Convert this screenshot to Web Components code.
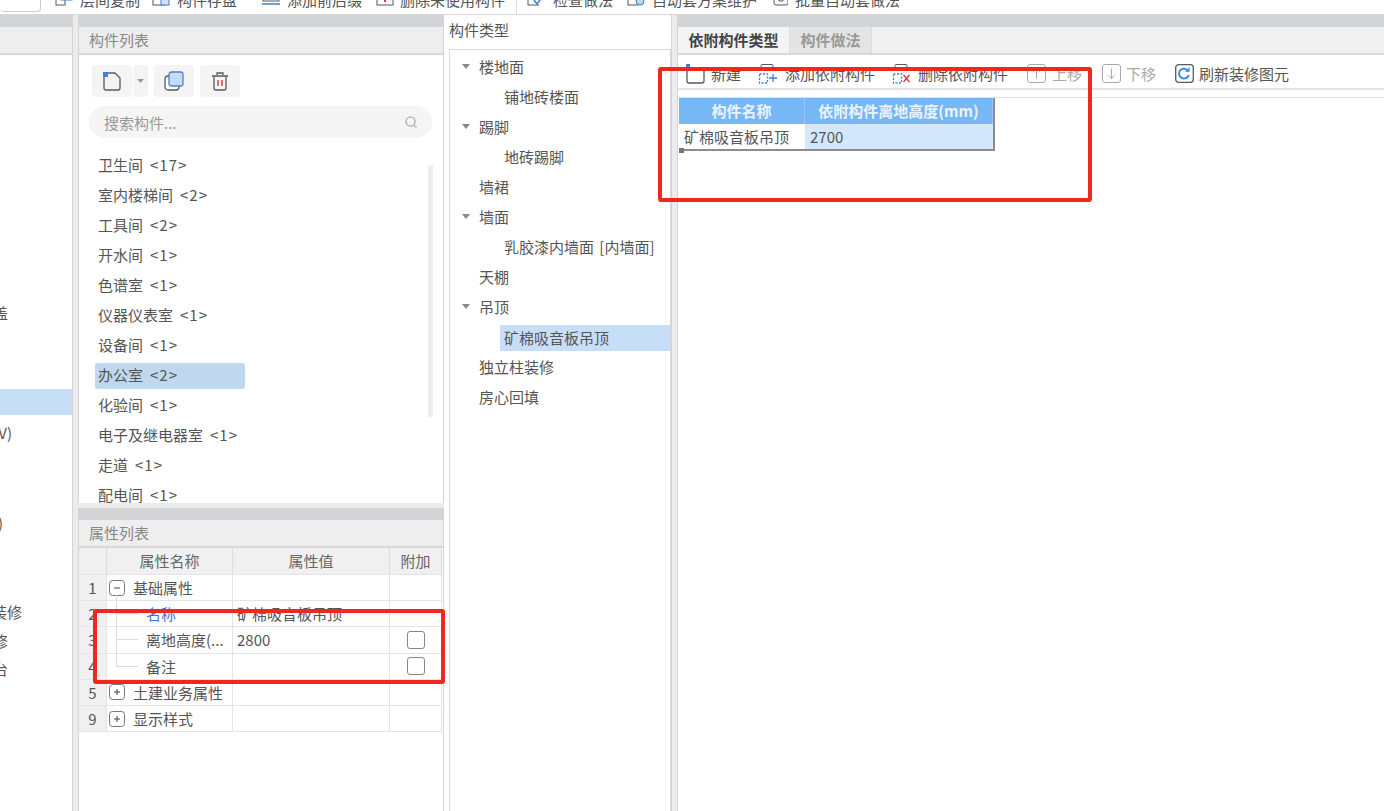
<!DOCTYPE html>
<html>
<head>
<meta charset="utf-8">
<style>
  html, body { margin: 0; height: 100%; overflow: hidden; background: #fff; }
  body { font: 15px "Noto Sans CJK SC", "Liberation Sans", sans-serif; color: #555; }
</style>
</head>
<body>
<app-shell></app-shell>

<script>
const FONT = `"Noto Sans CJK SC", "Liberation Sans", sans-serif`;

// top toolbar, only the lower part of it is on screen
const ICONS = {
  floors: `<rect x="1" y="3" width="9" height="10" fill="none" stroke="#556"/><rect x="6" y="0" width="11" height="8" fill="#fff" stroke="#3b7fd0"/>`,
  stock: `<rect x="1" y="1" width="12" height="12" fill="none" stroke="#556"/><rect x="9" y="4" width="8" height="9" fill="#cfe2f8" stroke="#3b7fd0"/>`,
  addFloor: `<rect x="1" y="0" width="16" height="9" fill="none" stroke="#556"/><path d="M0 12h18" stroke="#3b7fd0" stroke-width="1.5"/>`,
  delFloor: `<rect x="1" y="0" width="16" height="13" fill="none" stroke="#556"/><path d="M9 7v3" stroke="#d33" stroke-width="2"/>`,
  check: `<path d="M5 1H1v12h11" fill="none" stroke="#556"/><path d="M7 8l3 4 8-11" fill="none" stroke="#3b7fd0" stroke-width="1.6"/>`,
  auto: `<rect x="1" y="1" width="10" height="12" fill="none" stroke="#556"/><circle cx="13" cy="9" r="4" fill="#bcd6f5" stroke="#3b7fd0"/>`,
  batch: `<rect x="1" y="1" width="14" height="12" rx="2" fill="none" stroke="#556"/><path d="M6 1v8M10 1v8M6 9h4" stroke="#556"/>`
};

class TopBar extends HTMLElement {
  constructor() {
    super();
    this.attachShadow({ mode: "open" });
    // icon, label, icon width, gap to label, margin before
    const items = [
      ["floors", "层间复制", 18, 7, 14],
      ["stock", "构件存盘", 20, 5, 12],
      ["addFloor", "添加前后缀", 19, 6, 25],
      ["delFloor", "删除未使用构件", 19, 5, 14],
      ["check", "检查做法", 20, 6, 0],
      ["auto", "自动套方案维护", 18, 7, 14],
      ["batch", "批量自动套做法", 15, 7, 16]
    ];
    this.shadowRoot.innerHTML = `
      <style>
        :host { display: block; height: 14px; border-bottom: 1px solid #d6d6d6; overflow: hidden; background: #fff; }
        .row { display: flex; align-items: center; height: 20px; margin-top: -11px; }
        .input { width: 41px; height: 22px; border: 1px solid #ccc; border-radius: 4px; box-sizing: border-box; flex: none; margin-top: 4px; border-left: 0; }
        .item { display: flex; align-items: center; font-size: 15px; color: #555; white-space: nowrap; }
        svg { height: 14px; flex: none; }
        .sep { width: 1px; height: 30px; background: #ddd; margin: 0 10px 0 11px; flex: none; }
      </style>
      <div class="row">
        <div class="input"></div>
        ${items.map(([icon, label, w, gap, before], i) => `
          <div class="item" style="margin-left:${before}px">
            <svg viewBox="0 0 ${w} 14" style="width:${w}px;margin-right:${gap}px">${ICONS[icon]}</svg>${label}
          </div>
          ${i === 3 ? '<div class="sep"></div>' : ""}
        `).join("")}
      </div>`;
  }
}

// gray band + light title strip on top of a panel
class DockPanel extends HTMLElement {
  constructor() {
    super();
    this.attachShadow({ mode: "open" });
    this.shadowRoot.innerHTML = `
      <style>
        :host { display: flex; flex-direction: column; background: #fff; min-height: 0; box-sizing: border-box; border-right: 1px solid #d4d4d4; border-left: 1px solid #d4d4d4; }
        .band { height: 12px; flex: none; background: #d2d4d8; }
        .title { height: 26px; flex: none; background: #eeeeee; border-bottom: 2px solid #d8d8d8; padding-left: 10px; line-height: 26px; font-size: 15px; color: #888; }
        .body { flex: 1; min-height: 0; position: relative; overflow: hidden; }
      </style>
      <div class="band"></div>
      <div class="title"><slot name="title"></slot></div>
      <div class="body"><slot></slot></div>`;
  }
}

// the project tree, pushed off the left edge of the window
class ClippedTree extends HTMLElement {
  constructor() {
    super();
    this.attachShadow({ mode: "open" });
    const rows = [
      [30, "盖", 64], [60, ""], [2, ""], [26, "", 0, true], [2, ""], [30, "V)", 60],
      [60, ""], [30, ")", 69], [60, ""], [29, "装修", 50], [28, "修", 64], [28, "台", 64]
    ];
    this.shadowRoot.innerHTML = `
      <style>
        :host { display: block; padding-top: 242px; font-size: 15px; color: #555; overflow: hidden; }
        .row { display: flex; justify-content: flex-end; align-items: center; white-space: nowrap; }
        .sel { background: #c6def7; }
      </style>
      ${rows.map(([h, t, pad, sel]) => `<div class="row ${sel ? "sel" : ""}" style="height:${h}px;padding-right:${pad || 0}px">${t}</div>`).join("")}`;
  }
}

class ComponentList extends HTMLElement {
  constructor() {
    super();
    this.attachShadow({ mode: "open" });
    const rows = [
      ["卫生间", 17], ["室内楼梯间", 2], ["工具间", 2], ["开水间", 1],
      ["色谱室", 1], ["仪器仪表室", 1], ["设备间", 1], ["办公室", 2],
      ["化验间", 1], ["电子及继电器室", 1], ["走道", 1], ["配电间", 1]
    ];
    this.shadowRoot.innerHTML = `
      <style>
        :host { display: block; height: 100%; position: relative; font-family: ${FONT}; }
        .tools { display: flex; padding: 10px 0 0 13px; height: 33px; }
        .btn { background: #f4f4f4; border-radius: 4px; height: 32px; display: flex; align-items: center; justify-content: center; }
        .search { margin: 8px 11px 0 10px; height: 32px; border-radius: 16px; background: #f5f5f5; display: flex; align-items: center; justify-content: space-between; padding: 0 14px 0 15px; font-size: 15px; color: #999; }
        .rows { margin: 13px 0 0 16px; }
        .row { height: 30px; line-height: 28px; font-size: 15px; color: #555; padding-left: 3px; width: 150px; box-sizing: border-box; border-radius: 3px; white-space: nowrap; }
        .row span { margin-left: 7px; letter-spacing: 1px; }
        .row.on { background: #bfd8ef; height: 26px; line-height: 24px; margin: 2px 0; }
        .thumb { position: absolute; left: 349px; top: 110px; width: 5px; height: 252px; background: #ececec; border-radius: 3px; }
      </style>
      <div class="tools">
        <div class="btn" style="width:40px">
          <svg width="20" height="20" viewBox="0 0 20 20"><path d="M2 5v12a2 2 0 0 0 2 2h12a2 2 0 0 0 2-2V7l-5-5H5" fill="none" stroke="#555a66" stroke-width="1.3"/><rect x="1" y="1" width="5" height="5" fill="#3f7fdc"/></svg>
        </div>
        <div class="btn" style="width:15px;margin-left:1px"><svg width="7" height="4"><path d="M0 0h7L3.500 4z" fill="#999"/></svg></div>
        <div class="btn" style="width:40px;margin-left:6px">
          <svg width="20" height="20" viewBox="0 0 20 20"><rect x="1" y="5" width="14" height="14" rx="3" fill="#fff" stroke="#555a66" stroke-width="1.3"/><rect x="5" y="1" width="14" height="14" rx="2.500" fill="#c5dbf6" stroke="#4a82cc" stroke-width="1.3"/></svg>
        </div>
        <div class="btn" style="width:40px;margin-left:6px">
          <svg width="20" height="20" viewBox="0 0 20 20"><path d="M2 5h16M7 4V2h6v2M4 5v12a2 2 0 0 0 2 2h8a2 2 0 0 0 2-2V5" fill="none" stroke="#555a66" stroke-width="1.3"/><path d="M8 9v6M12 9v6" stroke="#d22" stroke-width="1.300"/></svg>
        </div>
      </div>
      <div class="search">
        <span>搜索构件...</span>
        <svg width="14" height="14" viewBox="0 0 14 14"><circle cx="6.500" cy="6.500" r="4.500" fill="none" stroke="#bbb" stroke-width="1.600"/><path d="M10 10l2.500 2.500" stroke="#bbb" stroke-width="1.600"/></svg>
      </div>
      <div class="rows">
        ${rows.map(([n, c]) => `<div class="row ${n === "办公室" ? "on" : ""}">${n}<span>&lt;${c}&gt;</span></div>`).join("")}
      </div>
      <div class="thumb"></div>`;
  }
}

class PropTable extends HTMLElement {
  constructor() {
    super();
    this.attachShadow({ mode: "open" });
    const box = s => `<svg class="box" width="16" height="16" viewBox="0 0 16 16"><rect x=".5" y=".5" width="15" height="15" rx="3" fill="#fff" stroke="#777"/><path d="${s === "-" ? "M5 8h6" : "M5 8h6M8 5v6"}" stroke="#444"/></svg>`;
    const rows = [
      ["1", `${box("-")}<span class="t">基础属性</span>`, "", false],
      ["2", `<span class="link name">名称</span>`, "矿棉吸音板吊顶", false],
      ["3", `<span class="name">离地高度(...</span>`, "2800", true],
      ["4", `<span class="name">备注</span>`, "", true],
      ["5", `${box("+")}<span class="t">土建业务属性</span>`, "", false],
      ["9", `${box("+")}<span class="t">显示样式</span>`, "", false]
    ];
    const lead = i => {
      if (i === 0) return `<i class="up"></i>`;
      if (i > 3) return "";
      return `<i class="lead ${i === 3 ? "end" : ""}"></i>`;
    };
    this.shadowRoot.innerHTML = `
      <style>
        :host { display: block; font-family: ${FONT}; font-size: 15px; color: #555; }
        .grid { display: grid; grid-template-columns: 28px 126px 157px 52px; grid-template-rows: 27px repeat(6, 26.2px); width: 363px; }
        .h, .c, .n { box-sizing: border-box; border-right: 1px solid #e4e4e4; border-bottom: 1px solid #e4e4e4; line-height: 25px; white-space: nowrap; overflow: hidden; }
        .h { background: #f0f0f0; text-align: center; color: #666; border-right-color: #ddd; }
        .n { background: #f0f0f0; text-align: center; }
        .c { display: flex; align-items: center; }
        .tree { position: relative; padding-left: 2px; }
        .v { padding-left: 4px; }
        .t { margin-left: 8px; }
        .name { margin-left: 37px; position: relative; }
        .link { color: #3f6fd8; }
        .chk { width: 18px; height: 18px; border: 1px solid #888; border-radius: 3px; box-sizing: border-box; margin: 0 auto; background: #fff; }
        .up { position: absolute; left: 9px; top: 20px; bottom: 0; border-left: 1px solid #ddd; }
        .lead { position: absolute; left: 9px; top: 0; bottom: 0; border-left: 1px solid #ddd; }
        .lead.end { bottom: 12px; }
        .lead::after { content: ""; position: absolute; left: 0; top: 12px; width: 21px; border-top: 1px solid #ddd; }
      </style>
      <div class="grid">
        <div class="h"></div><div class="h">属性名称</div><div class="h">属性值</div><div class="h">附加</div>
        ${rows.map(([n, name, val, chk], i) => `
          <div class="n">${n}</div>
          <div class="c tree">${lead(i)}${name}</div>
          <div class="c v">${val}</div>
          <div class="c">${chk ? '<div class="chk"></div>' : ""}</div>
        `).join("")}
      </div>`;
  }
}

class TypeTree extends HTMLElement {
  constructor() {
    super();
    this.attachShadow({ mode: "open" });
    const rows = [
      [0, "楼地面", true], [1, "铺地砖楼面"], [0, "踢脚", true], [1, "地砖踢脚"],
      [0, "墙裙"], [0, "墙面", true], [1, "乳胶漆内墙面 [内墙面]"], [0, "天棚"],
      [0, "吊顶", true], [1, "矿棉吸音板吊顶", false, true], [0, "独立柱装修"], [0, "房心回填"]
    ];
    this.shadowRoot.innerHTML = `
      <style>
        :host { display: flex; flex-direction: column; font-family: ${FONT}; font-size: 15px; color: #555; background: #fff; border-right: 1px solid #d4d4d4; box-sizing: border-box; }
        .head { height: 34px; line-height: 30px; padding-left: 5px; flex: none; color: #555; }
        .tree { flex: 1; margin-left: 5px; border: 1px solid #d8d8d8; border-bottom: 0; padding-top: 3px; }
        .row { height: 30px; line-height: 28px; position: relative; white-space: nowrap; }
        .l0 { padding-left: 29px; }
        .l1 { padding-left: 54px; word-spacing: 2px; }
        .on { margin-left: 50px; padding-left: 4px; height: 26px; line-height: 26px; margin-top: 2px; margin-bottom: 2px; background: #c6def7; }
        svg { position: absolute; left: 12px; top: 11px; }
      </style>
      <div class="head">构件类型</div>
      <div class="tree">
        ${rows.map(([lvl, t, arrow, on]) => `<div class="row l${lvl} ${on ? "on" : ""}">${arrow ? `<svg width="8" height="5"><path d="M0 0h8L4 5z" fill="#888"/></svg>` : ""}${t}</div>`).join("")}
      </div>`;
  }
}

class DependPane extends HTMLElement {
  constructor() {
    super();
    this.attachShadow({ mode: "open" });
    const dashed = `<rect x="1.500" y="10" width="8" height="9" fill="none" stroke="#3f7fdc" stroke-width="1.300" stroke-dasharray="2 1.500"/>`;
    const gray = `<path d="M3 7V1.500a1 1 0 0 1 1-1h10a1 1 0 0 1 1 1V7" fill="none" stroke="#555a66"/>`;
    this.shadowRoot.innerHTML = `
      <style>
        :host { display: flex; flex-direction: column; font-family: ${FONT}; font-size: 15px; color: #555; background: #fff; border-left: 1px solid #d4d4d4; min-height: 0; }
        .band { height: 12px; background: #d2d4d8; flex: none; }
        .tabs { height: 26px; background: #f0f0f0; border-bottom: 2px solid #d8d8d8; display: flex; flex: none; }
        .tab { width: 112px; height: 26px; text-align: center; line-height: 26px; font-weight: 700; color: #444; background: #f4f4f4; border-right: 1px solid #ddd; box-sizing: border-box; }
        .tab.off { width: 82px; background: #e4e4e4; color: #999; font-weight: 700; }
        .bar { height: 35px; display: flex; align-items: center; border-bottom: 2px solid #e4e4e4; flex: none; box-sizing: border-box; padding: 4px 0 0 8px; }
        .b { display: flex; align-items: center; white-space: nowrap; }
        .b svg { flex: none; }
        .dim { color: #aaa; }
        .gap { height: 7px; border-bottom: 1px solid #e4e4e4; flex: none; }
        .grid { display: grid; grid-template-columns: 126px 188px; grid-template-rows: 26px 25px; width: 314px; margin-left: 1px; border-right: 2px solid #8c8c8c; border-bottom: 2px solid #8c8c8c; position: relative; flex: none; }
        .th { background: #78b7f5; color: #e9f3fd; font-weight: 700; text-align: center; line-height: 26px; border-right: 1px solid #94c6f7; box-sizing: border-box; white-space: nowrap; }
        .td { line-height: 25px; padding-left: 5px; white-space: nowrap; box-sizing: border-box; }
        .td.v { background: #d3e8fd; }
        .handle { position: absolute; left: 0; bottom: -4px; width: 5px; height: 5px; background: #777; }
      </style>
      <div class="band"></div>
      <div class="tabs"><div class="tab">依附构件类型</div><div class="tab off">构件做法</div></div>
      <div class="bar">
        <div class="b" style="gap:6px"><svg width="19" height="20" viewBox="0 0 19 20"><path d="M1 4v13a2 2 0 0 0 2 2h13a2 2 0 0 0 2-2V4" fill="none" stroke="#555a66" stroke-width="1.300"/><path d="M1 4h17" stroke="#555a66" stroke-width="1.300"/><rect x="0" y="0" width="4" height="4" fill="#3f7fdc"/></svg>新建</div>
        <div class="b" style="margin-left:17px;gap:8px"><svg width="19" height="20" viewBox="0 0 19 20">${gray}${dashed}<path d="M11 14h8M15 10v8" stroke="#3f7fdc" stroke-width="1.300"/></svg>添加依附构件</div>
        <div class="b" style="margin-left:17px;gap:7px"><svg width="19" height="20" viewBox="0 0 19 20">${gray}${dashed}<path d="M11.500 11l6 7M17.500 11l-6 7" stroke="#d33" stroke-width="1.300"/></svg>删除依附构件</div>
        <div class="b dim" style="margin-left:19px;gap:6px"><svg width="19" height="19" viewBox="0 0 19 19"><rect x=".5" y=".5" width="18" height="18" rx="2.500" fill="none" stroke="#aaa"/><path d="M9.500 4.500v10M6.500 7.500l3-3 3 3" fill="none" stroke="#aaa"/></svg>上移</div>
        <div class="b dim" style="margin-left:20px;gap:5px"><svg width="19" height="19" viewBox="0 0 19 19"><rect x=".5" y=".5" width="18" height="18" rx="2.500" fill="none" stroke="#aaa"/><path d="M9.500 4.500v10M6.500 11.500l3 3 3-3" fill="none" stroke="#aaa"/></svg>下移</div>
        <div class="b" style="margin-left:19px;gap:5px"><svg width="19" height="19" viewBox="0 0 19 19"><rect x=".7" y=".7" width="17.600" height="17.600" rx="3" fill="none" stroke="#555a66" stroke-width="1.300"/><path d="M13 6.500a5 5 0 1 0 .8 4.500" fill="none" stroke="#2f7fe0" stroke-width="1.800"/><path d="M14 3.500v3.500h-3.500" fill="none" stroke="#2f7fe0" stroke-width="1.300"/></svg>刷新装修图元</div>
      </div>
      <div class="gap"></div>
      <div class="grid">
        <div class="th">构件名称</div><div class="th">依附构件离地高度(mm)</div>
        <div class="td">矿棉吸音板吊顶</div><div class="td v">2700</div>
        <div class="handle"></div>
      </div>`;
  }
}

class AppShell extends HTMLElement {
  constructor() {
    super();
    this.attachShadow({ mode: "open" });
    this.shadowRoot.innerHTML = `
      <style>
        :host { display: block; width: 1384px; height: 811px; position: relative; overflow: hidden; font-family: ${FONT}; background: #fff; }
        .main { display: flex; height: 796px; background: #ececec; }
        .left { width: 73px; flex: none; margin-right: 5px; border-left: 0; }
        .mid { width: 366px; flex: none; display: flex; flex-direction: column; gap: 5px; }
        .mid dock-panel:first-child { height: 488px; flex: none; }
        .mid dock-panel:last-child { flex: 1; }
        type-tree { width: 228px; flex: none; }
        depend-pane { flex: 1; margin-left: 5px; }
        .mark { position: absolute; box-sizing: border-box; border: 4px solid #f0271c; border-radius: 3px; z-index: 5; }
      </style>
      <top-bar></top-bar>
      <div class="main">
        <dock-panel class="left"><clipped-tree></clipped-tree></dock-panel>
        <div class="mid">
          <dock-panel><span slot="title">构件列表</span><component-list></component-list></dock-panel>
          <dock-panel><span slot="title">属性列表</span><prop-table></prop-table></dock-panel>
        </div>
        <type-tree></type-tree>
        <depend-pane></depend-pane>
      </div>
      <div class="mark" style="left:658px;top:67px;width:434px;height:135px"></div>
      <div class="mark" style="left:93px;top:609px;width:352px;height:75px"></div>`;
  }
}

customElements.define("top-bar", TopBar);
customElements.define("dock-panel", DockPanel);
customElements.define("clipped-tree", ClippedTree);
customElements.define("component-list", ComponentList);
customElements.define("prop-table", PropTable);
customElements.define("type-tree", TypeTree);
customElements.define("depend-pane", DependPane);
customElements.define("app-shell", AppShell);
</script>
</body>
</html>
